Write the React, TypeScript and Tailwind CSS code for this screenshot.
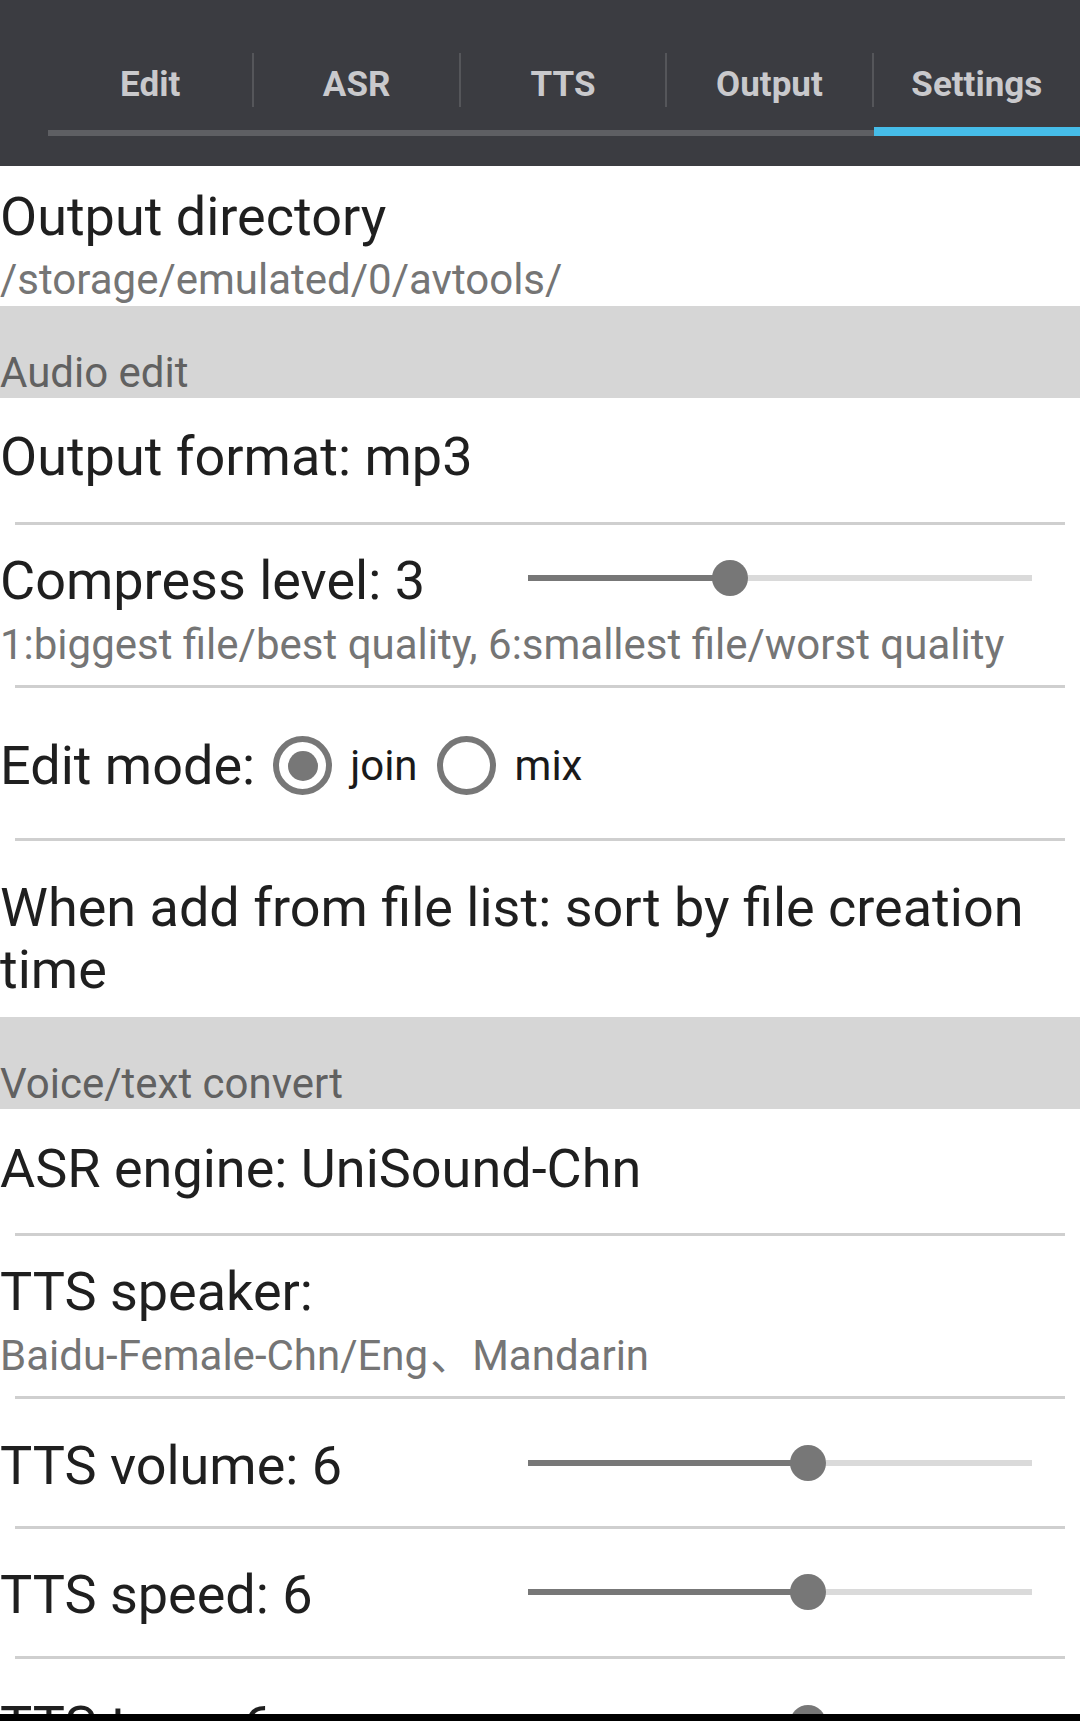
import React from "react";

const Divider = () => <div className="mx-[15px] h-[3px] shrink-0 bg-[#cfcfcf]" />;

function Slider({ frac }: { frac: number }) {
  return (
    <div className="relative mb-[6px] mr-[48px] h-[36px] w-[504px] shrink-0">
      <div className="absolute left-0 right-0 top-[15px] h-[6px] bg-[#dadada]" />
      <div className="absolute left-0 top-[15px] h-[6px] bg-[#777777]" style={{ width: `${frac * 100}%` }} />
      <div
        className="absolute top-0 -ml-[18px] h-[36px] w-[36px] rounded-full bg-[#777777]"
        style={{ left: `${frac * 100}%` }}
      />
    </div>
  );
}

const Title = ({ children }: { children: React.ReactNode }) => (
  <div className="text-[54px] leading-[63px] text-[#1f1f1f]">{children}</div>
);

const Summary = ({ children, className = "" }: { children: React.ReactNode; className?: string }) => (
  <div className={`text-[42px] leading-[49px] text-[#757575] ${className}`}>{children}</div>
);

const Category = ({ children }: { children: React.ReactNode }) => (
  <div className="h-[92px] shrink-0 bg-[#d6d6d6] pt-[42px] text-[42px] leading-[49px] text-[#616161]">{children}</div>
);

function Radio({ checked }: { checked?: boolean }) {
  return (
    <div className="flex h-[59px] w-[59px] shrink-0 items-center justify-center rounded-full border-[6px] border-[#777777]">
      {checked && <div className="h-[30px] w-[30px] rounded-full bg-[#777777]" />}
    </div>
  );
}

const tabs = ["Edit", "ASR", "TTS", "Output", "Settings"];

export default function App() {
  return (
    <div className="flex h-[1721px] w-[1080px] flex-col overflow-hidden bg-white font-['Roboto','Noto_Sans_CJK_SC',sans-serif]">
      {/* Header tabs */}
      <div className="h-[166px] shrink-0 bg-[#3b3c41] pl-[48px] pt-[53px]">
        <div className="flex h-[83px]">
          {tabs.map((t, i) => {
            const active = i === tabs.length - 1;
            return (
              <div key={t} className="flex flex-1 flex-col">
                <div
                  className={`flex h-[54px] items-center justify-center pt-[10px] text-[35px] font-bold text-[#c9c9cc] ${
                    i < tabs.length - 1 ? "border-r-2 border-[#55565a]" : ""
                  }`}
                >
                  {t}
                </div>
                <div className="mt-auto">
                  {active ? (
                    <div className="h-[9px] bg-[#46bde9]" />
                  ) : (
                    <div className="h-[6px] bg-[#5e5f63]" />
                  )}
                </div>
              </div>
            );
          })}
        </div>
      </div>

      <div className="flex flex-1 flex-col overflow-hidden">
        {/* Output directory */}
        <div className="h-[140px] shrink-0 pt-[19px]">
          <Title>Output directory</Title>
          <Summary className="mt-[7px]">/storage/emulated/0/avtools/</Summary>
        </div>

        <Category>Audio edit</Category>

        <div className="h-[124px] shrink-0 pt-[27px]">
          <Title>Output format: mp3</Title>
        </div>
        <Divider />

        <div className="h-[160px] shrink-0 pt-[24px]">
          <div className="flex h-[63px] items-center">
            <div className="flex-1">
              <Title>Compress level: 3</Title>
            </div>
            <Slider frac={0.4} />
          </div>
          <Summary className="mt-[8px]">1:biggest file/best quality, 6:smallest file/worst quality</Summary>
        </div>
        <Divider />

        <div className="h-[150px] shrink-0 pt-[46px]">
          <div className="flex h-[63px] items-center">
            <Title>Edit mode:</Title>
            <div className="ml-[18px]">
              <Radio checked />
            </div>
            <span className="ml-[18px] text-[42px] leading-[49px] text-[#1a1a1a]">join</span>
            <div className="ml-[19px]">
              <Radio />
            </div>
            <span className="ml-[19px] text-[42px] leading-[49px] text-[#1a1a1a]">mix</span>
          </div>
        </div>
        <Divider />

        <div className="h-[176px] shrink-0 pt-[36px]">
          <div className="text-[54px] leading-[62px] text-[#1f1f1f]">
            When add from file list: sort by file creation time
          </div>
        </div>

        <Category>Voice/text convert</Category>

        <div className="h-[124px] shrink-0 pt-[28px]">
          <Title>ASR engine: UniSound-Chn</Title>
        </div>
        <Divider />

        <div className="h-[160px] shrink-0 pt-[24px]">
          <Title>TTS speaker:</Title>
          <Summary className="mt-[8px]">
            Baidu-Female-Chn/Eng<span className="ml-[2px]">、</span>Mandarin
          </Summary>
        </div>
        <Divider />

        <div className="h-[127px] shrink-0 pt-[35px]">
          <div className="flex h-[63px] items-center">
            <div className="flex-1">
              <Title>TTS volume: 6</Title>
            </div>
            <Slider frac={5 / 9} />
          </div>
        </div>
        <Divider />

        <div className="h-[127px] shrink-0 pt-[34px]">
          <div className="flex h-[63px] items-center">
            <div className="flex-1">
              <Title>TTS speed: 6</Title>
            </div>
            <Slider frac={5 / 9} />
          </div>
        </div>
        <Divider />

        <div className="h-[127px] shrink-0 pt-[35px]">
          <div className="flex h-[63px] items-center">
            <div className="flex-1">
              <Title>TTS tone: 6</Title>
            </div>
            <Slider frac={5 / 9} />
          </div>
        </div>
      </div>

      <div className="h-[7px] shrink-0 bg-black" />
    </div>
  );
}
